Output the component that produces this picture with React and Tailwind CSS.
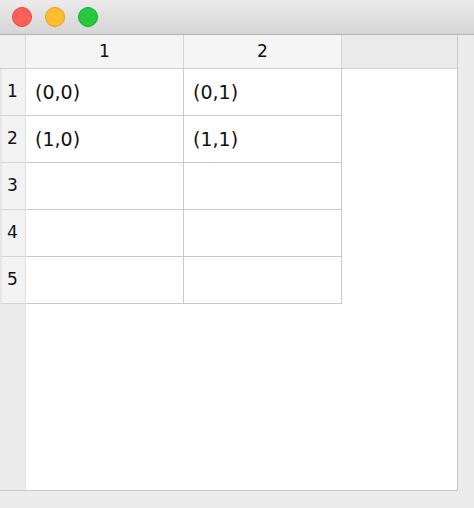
const rows = [
  ['(0,0)', '(0,1)'],
  ['(1,0)', '(1,1)'],
  ['', ''],
  ['', ''],
  ['', ''],
];

export default function App() {
  return (
    <div className="w-[474px] h-[508px] flex flex-col bg-[#ececec] font-['DejaVu_Sans',Verdana,sans-serif] text-[#111]">
      {/* title bar */}
      <div className="h-[35px] shrink-0 flex items-center gap-[13px] pl-[12px] bg-gradient-to-b from-[#ebebeb] to-[#d5d5d5] border-b border-[#b3b3b3]">
        <span className="w-[20px] h-[20px] rounded-full bg-[#fe5f57] border border-[#e2463f]" />
        <span className="w-[20px] h-[20px] rounded-full bg-[#febc2e] border border-[#e1a116]" />
        <span className="w-[20px] h-[20px] rounded-full bg-[#28c840] border border-[#14ae2b]" />
      </div>

      <div className="flex flex-1">
        <div className="w-[458px] h-[456px] flex flex-col bg-white border-r border-b border-[#c8c8c8]">
          {/* column headers */}
          <div className="h-[34px] flex shrink-0 border-b border-[#d0d0d0] bg-[#ebebeb]">
            <div className="w-[26px] bg-[#f0f0f0] border-r border-[#dadada]" />
            {['1', '2'].map((h) => (
              <div
                key={h}
                className="w-[158px] bg-[#f5f5f5] border-r border-[#d6d6d6] flex items-center justify-center text-[17px]"
              >
                {h}
              </div>
            ))}
            <div className="flex-1" />
          </div>

          {/* body */}
          <div className="flex flex-1">
            <div className="w-[26px] bg-[#ececec] border-r border-[#e0e0e0] flex flex-col">
              {rows.map((_, i) => (
                <div
                  key={i}
                  className="h-[47px] bg-[#f3f3f3] border-b border-[#d4d4d4] border-l-2 border-l-[#e6e6e6] flex items-center pl-[5px] text-[17px]"
                >
                  {i + 1}
                </div>
              ))}
            </div>
            <div className="flex flex-col">
              {rows.map((r, i) => (
                <div key={i} className="flex h-[47px]">
                  {r.map((c, j) => (
                    <div
                      key={j}
                      className="w-[158px] border-r border-b border-[#c9c9c9] flex items-center pl-[9px] text-[19px]"
                    >
                      {c}
                    </div>
                  ))}
                </div>
              ))}
            </div>
          </div>
        </div>
        <div className="flex-1" />
      </div>
    </div>
  );
}
